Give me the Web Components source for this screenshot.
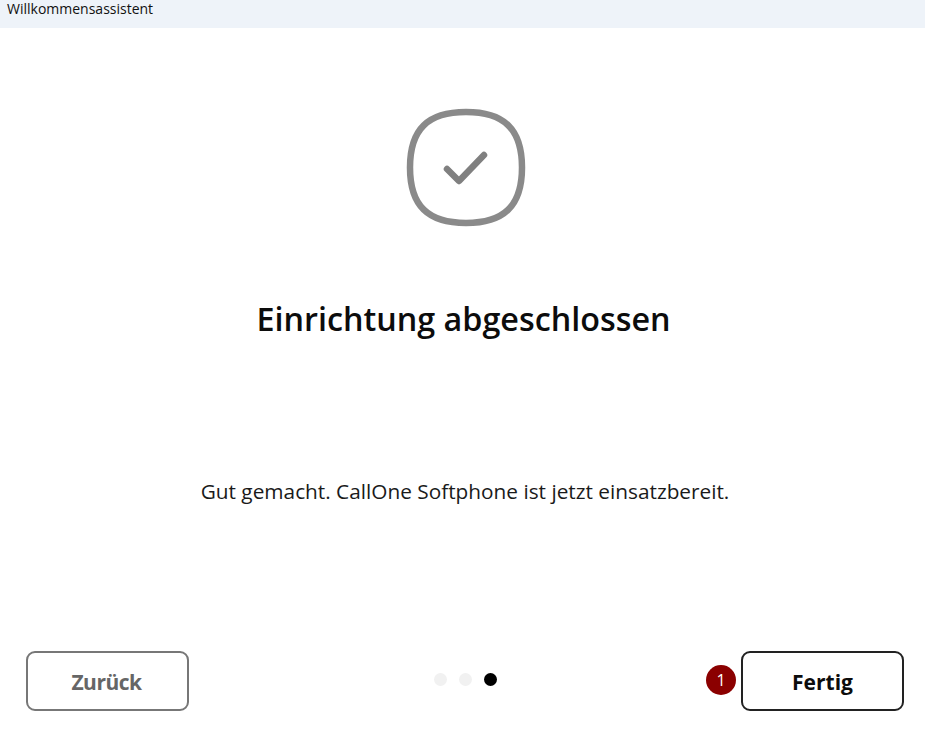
<!DOCTYPE html>
<html lang="de"><head><meta charset="utf-8"><style>html,body{margin:0;height:100%;background:#fff}body{font-family:"Open Sans","Noto Sans",sans-serif}</style></head><body>
<wizard-page></wizard-page>
<script>
class TitleBar extends HTMLElement{constructor(){super();this.attachShadow({mode:'open'}).innerHTML=`<style>:host{display:flex;height:28px;background:#eef3f9;box-sizing:border-box;padding:0 7px;font:14px/17px "Open Sans",sans-serif;color:#111}</style><slot></slot>`}}
class WizButton extends HTMLElement{constructor(){super();this.attachShadow({mode:'open'}).innerHTML=`<style>:host{display:flex;align-items:center;justify-content:center;width:163px;height:60px;box-sizing:border-box;border:2.5px solid #222;border-radius:9px;padding-top:2px;font:700 21px "Open Sans",sans-serif;color:#0c0c0c;background:#fff}:host([disabled]){border-color:#777;color:#666;letter-spacing:-.5px;padding-right:2px}</style><slot></slot>`}}
class PageDots extends HTMLElement{constructor(){super();this.attachShadow({mode:'open'}).innerHTML=`<style>:host{display:flex;gap:12px;align-items:center;margin-bottom:3px}i{width:13px;height:13px;border-radius:50%;background:#f1f1f1}i.on{background:#000}</style><i></i><i></i><i class="on"></i>`}}
class WizardPage extends HTMLElement{constructor(){super();this.attachShadow({mode:'open'}).innerHTML=`<style>:host{display:flex;flex-direction:column;height:736px;overflow:hidden}main{flex:1;display:flex;flex-direction:column;align-items:center}svg{display:block;margin:79px 0 0 7px}h1{margin:69px 0 0 2px;font:600 32.3px/44px "Open Sans",sans-serif;color:#0c0c0c}p{margin:137px 0 0 5px;font:400 20.8px/28px "Open Sans",sans-serif;color:#1a1a1a}footer{display:grid;grid-template-columns:1fr auto 1fr;align-items:center;padding:0 21px 25px 26px}.r{display:flex;justify-content:flex-end;align-items:center;gap:5px}.badge{width:30px;height:30px;border-radius:50%;background:#8b0000;color:#fff;display:flex;align-items:center;justify-content:center;font:16px "Open Sans",sans-serif;margin-bottom:3px}.l{display:flex}</style>
<title-bar>Willkommensassistent</title-bar>
<main><svg width="120" height="120" viewBox="0 0 120 120" fill="none"><path d="M60 5C98 5 116 22 116 60.500S98 116 60 116 4 99 4 60.500 22 5 60 5Z" stroke="#8a8a8a" stroke-width="6.500"/><path d="M41 62L53 74 78 48" stroke="#808080" stroke-width="6.500" stroke-linecap="round" stroke-linejoin="round"/></svg><h1>Einrichtung abgeschlossen</h1><p>Gut gemacht. CallOne Softphone ist jetzt einsatzbereit.</p></main>
<footer><div class="l"><wiz-button disabled>Zurück</wiz-button></div><page-dots></page-dots><div class="r"><span class="badge">1</span><wiz-button>Fertig</wiz-button></div></footer>`}}
customElements.define('title-bar',TitleBar);customElements.define('wiz-button',WizButton);customElements.define('page-dots',PageDots);customElements.define('wizard-page',WizardPage);
</script></body></html>
